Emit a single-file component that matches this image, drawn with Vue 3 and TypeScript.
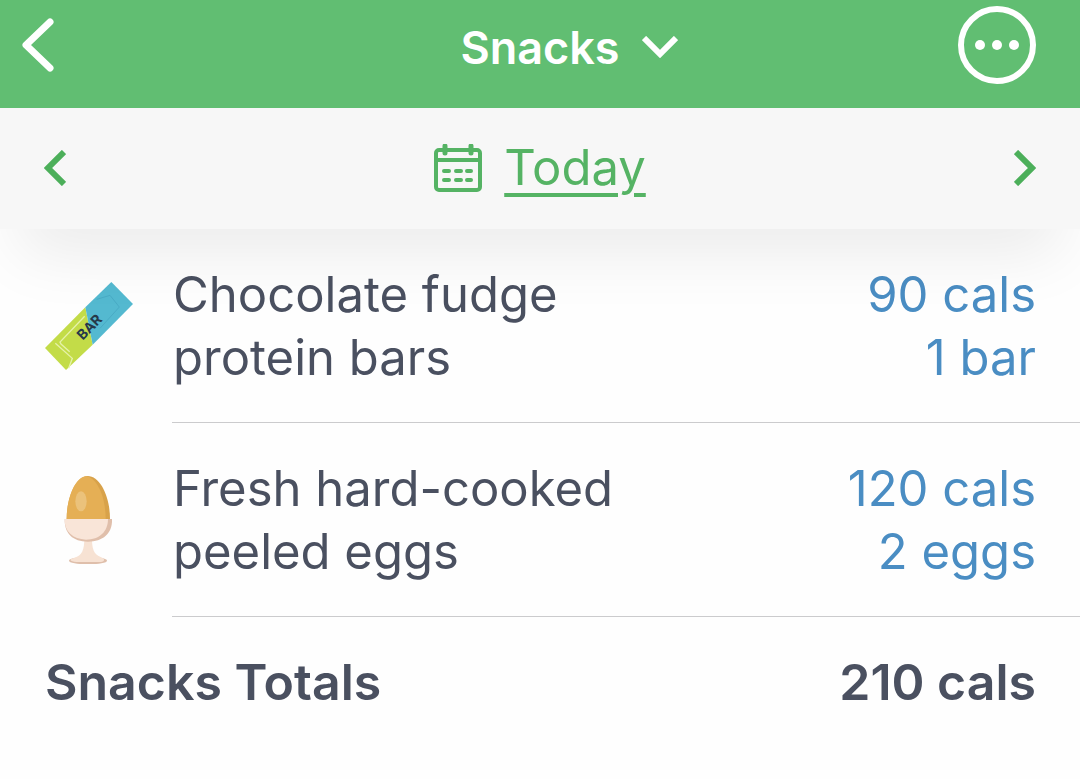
<script setup lang="ts">
interface FoodEntry {
  id: string
  icon: 'bar' | 'egg'
  name: string
  calories: number
  serving: string
}

const entries: FoodEntry[] = [
  { id: 'protein-bar', icon: 'bar', name: 'Chocolate fudge protein bars', calories: 90, serving: '1 bar' },
  { id: 'peeled-eggs', icon: 'egg', name: 'Fresh hard-cooked peeled eggs', calories: 120, serving: '2 eggs' },
]

const total = entries.reduce((sum, entry) => sum + entry.calories, 0)
</script>

<template>
  <div class="page">
    <header class="top-bar">
      <button class="icon-button back" type="button" aria-label="Back">
        <svg width="32" height="54" viewBox="0 0 32 54" fill="none">
          <path d="M28 4 4 27 28 50" stroke="#fff" stroke-width="7" stroke-linecap="round" stroke-linejoin="round" />
        </svg>
      </button>
      <button class="meal" type="button">
        <h1 class="meal-name">Snacks</h1>
        <svg width="36" height="22" viewBox="0 0 36 22" fill="none" aria-hidden="true">
          <path d="M2 2 18 18 34 2" stroke="#fff" stroke-width="6" />
        </svg>
      </button>
      <button class="icon-button more" type="button" aria-label="More options">
        <svg width="78" height="78" viewBox="0 0 78 78">
          <circle cx="39" cy="39" r="36" fill="none" stroke="#fff" stroke-width="6" />
          <circle cx="22" cy="39" r="5" fill="#fff" />
          <circle cx="39" cy="39" r="5" fill="#fff" />
          <circle cx="56" cy="39" r="5" fill="#fff" />
        </svg>
      </button>
    </header>

    <nav class="date-bar" aria-label="Date">
      <button class="icon-button" type="button" aria-label="Previous day">
        <svg width="22" height="36" viewBox="0 0 22 36" fill="none">
          <path d="M20 2 4 18 20 34" stroke="#4caf5a" stroke-width="6" />
        </svg>
      </button>
      <a class="today" href="#today">
        <svg width="48" height="48" viewBox="0 0 48 48" fill="none" stroke="#55b364" aria-hidden="true">
          <rect x="2" y="6" width="44" height="40" rx="3" stroke-width="4" />
          <path d="M2 16H46" stroke-width="4" />
          <path d="M11 2V9M37 2V9" stroke-width="5" stroke-linecap="round" />
          <path d="M10 27H15M22 27H27M33 27H37M10 36H15M22 36H27M33 36H37" stroke-width="4" stroke-linecap="round" />
        </svg>
        <span class="today-text">Today</span>
      </a>
      <button class="icon-button" type="button" aria-label="Next day">
        <svg width="22" height="36" viewBox="0 0 22 36" fill="none">
          <path d="M2 2 18 18 2 34" stroke="#4caf5a" stroke-width="6" />
        </svg>
      </button>
    </nav>

    <main>
      <ul class="entries">
        <li v-for="entry in entries" :key="entry.id" class="entry">
          <svg v-if="entry.icon === 'bar'" class="food-icon" viewBox="45 51 264 264" aria-hidden="true">
            <path d="M166 127 188 239 108 315 45 249Z" fill="#c3dc48" />
            <path d="M244 51 309 117 188 239 166 127Z" fill="#54b9d0" />
            <path d="M200 103 240 91 268 126 210 190" fill="none" stroke="#49abc5" stroke-width="3" />
            <path d="M164 154 90 231 93 237 119 260" fill="none" stroke="#e6f2a9" stroke-width="4" />
            <path d="M76 235 127 280 116 310" fill="none" stroke="#e6f2a9" stroke-width="4" />
            <text class="bar-label" x="177" y="185" text-anchor="middle" dominant-baseline="central" transform="rotate(-45 177 185)">BAR</text>
          </svg>
          <svg v-else class="food-icon" viewBox="15 45 264 264" aria-hidden="true">
            <path d="M143 45C181 45 210 108 210 174H80C80 108 108 45 143 45Z" fill="#d8a24a" />
            <path d="M138 46C172 50 197 110 197 174H80C80 110 106 48 138 46Z" fill="#e5af55" />
            <ellipse cx="123" cy="121" rx="17" ry="30" fill="#ebc27b" />
            <ellipse cx="144" cy="299" rx="57" ry="11" fill="#dfbfab" />
            <path d="M133 232H156C156 262 160 280 182 288 196 293 196 301 182 303H110C88 301 86 295 103 290 126 284 133 268 133 232Z" fill="#f7e2d3" />
            <path d="M74 174H216C218 218 188 242 144 242 98 242 73 218 74 174Z" fill="#e0bfab" />
            <path d="M74 174H204C204 212 178 236 138 236 98 234 73 212 74 174Z" fill="#f9e5d8" />
          </svg>
          <span class="food-name">{{ entry.name }}</span>
          <span class="amount">
            <span>{{ entry.calories }} cals</span>
            <span>{{ entry.serving }}</span>
          </span>
        </li>
      </ul>
      <div class="totals">
        <span>Snacks Totals</span>
        <span>{{ total }} cals</span>
      </div>
    </main>
  </div>
</template>

<style>
body {
  margin: 0;
  background: #fefefe;
}
</style>

<style scoped>
.page {
  font-family: Inter, "Liberation Sans", sans-serif;
  font-size: 49px;
  line-height: 63px;
  color: #4a5060;
}

button {
  margin: 0;
  padding: 0;
  border: 0;
  background: none;
  font: inherit;
  color: inherit;
  cursor: pointer;
}

svg {
  display: block;
  flex: none;
}

.top-bar {
  display: grid;
  grid-template-columns: 1fr auto 1fr;
  align-items: center;
  padding: 6px 44px 24px 22px;
  background: #61be72;
  color: #fff;
}

.back {
  justify-self: start;
}

.more {
  justify-self: end;
}

.meal {
  display: flex;
  align-items: center;
  gap: 22px;
  padding: 4px 0 0 80px;
}

.meal-name {
  margin: 0;
  font-size: 45px;
  font-weight: 600;
  line-height: 63px;
}

.date-bar {
  position: relative;
  display: flex;
  align-items: center;
  justify-content: space-between;
  padding: 28px 44px 30px;
  background: #f7f7f7;
  box-shadow: 0 44px 64px -20px rgba(0, 0, 0, 0.08);
}

.today {
  display: flex;
  align-items: center;
  gap: 22px;
  color: #55b364;
  text-decoration: none;
}

.today-text {
  text-decoration: underline;
  text-decoration-thickness: 4px;
  text-underline-offset: 8px;
}

.entries {
  margin: 0;
  padding: 0;
  list-style: none;
}

.entry {
  display: grid;
  grid-template-columns: 88px minmax(0, 460px) 1fr;
  column-gap: 40px;
  align-items: center;
  padding: 34px 44px 34px 45px;
  background: linear-gradient(#cbcbcd, #cbcbcd) 172px 100% / 100% 1px no-repeat;
}

.food-icon {
  width: 88px;
  height: 88px;
}

.bar-label {
  font-size: 42px;
  font-weight: 700;
  fill: #26394a;
}

.amount {
  display: flex;
  flex-direction: column;
  align-items: flex-end;
  color: #4a8dc3;
}

.totals {
  display: flex;
  justify-content: space-between;
  padding: 34px 44px 34px 45px;
  font-size: 50px;
  font-weight: 600;
}
</style>
